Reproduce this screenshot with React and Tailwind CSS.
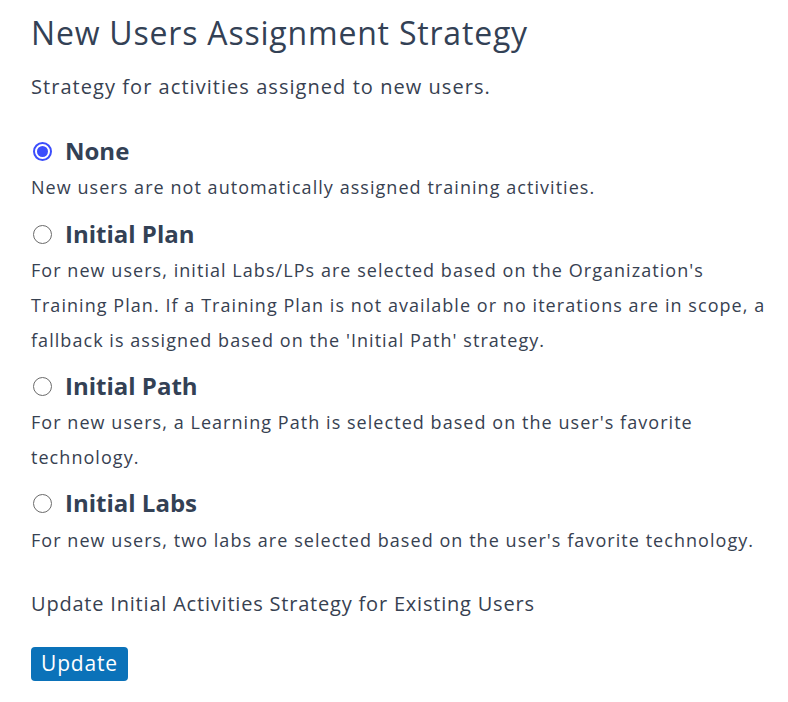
export default function App() {
  const Radio = ({ checked }) =>
    checked ? (
      <span className="flex h-[19px] w-[19px] shrink-0 items-center justify-center rounded-full border-2 border-[#3b4dfc] bg-white">
        <span className="h-[11px] w-[11px] rounded-full bg-[#3b4dfc]" />
      </span>
    ) : (
      <span className="h-[19px] w-[19px] shrink-0 rounded-full border-[1.5px] border-[#6b6b6b] bg-white" />
    );

  const Option = ({ checked, label, lines, className, descClass = "mt-[4px]" }) => (
    <div className={className}>
      <div className="flex h-[30px] items-center gap-[13px] pl-[2px]">
        <Radio checked={checked} />
        <span className="text-[24px] font-bold text-[#334155]">{label}</span>
      </div>
      <div className={`${descClass} text-[18px] leading-[35px] tracking-[1.05px] text-[#374151]`}>
        {lines.map((l, i) => (
          <div key={i} className="whitespace-nowrap">{l}</div>
        ))}
      </div>
    </div>
  );

  return (
    <div className="min-h-screen bg-white pl-[31px] pt-[14px] text-[#334155]" style={{ fontFamily: '"Open Sans", sans-serif' }}>
      <h1 className="text-[32px] leading-[38px] tracking-[0.8px] text-[#334155]">New Users Assignment Strategy</h1>
      <p className="mt-[23px] text-[20px] leading-[24px] tracking-[1.05px] text-[#374151]">Strategy for activities assigned to new users.</p>
      <div className="mt-[37px] flex flex-col">
        <Option checked label="None" lines={["New users are not automatically assigned training activities."]} />
        <Option
          className="mt-[14px]"
          label="Initial Plan"
          lines={[
            "For new users, initial Labs/LPs are selected based on the Organization's",
            "Training Plan. If a Training Plan is not available or no iterations are in scope, a",
            "fallback is assigned based on the 'Initial Path' strategy.",
          ]}
        />
        <Option
          className="mt-[13px]"
          label="Initial Path"
          lines={["For new users, a Learning Path is selected based on the user's favorite", "technology."]}
        />
        <Option
          className="mt-[13px]"
          descClass="mt-[5px]"
          label="Initial Labs"
          lines={["For new users, two labs are selected based on the user's favorite technology."]}
        />
      </div>
      <p className="mt-[34px] text-[20px] leading-[24px] tracking-[0.8px] text-[#374151]">Update Initial Activities Strategy for Existing Users</p>
      <button className="mt-[31px] flex h-[34px] w-[97px] items-center justify-center rounded-[4px] bg-[#0b72b9] text-[21px] tracking-[0.8px] text-white">
        Update
      </button>
    </div>
  );
}
